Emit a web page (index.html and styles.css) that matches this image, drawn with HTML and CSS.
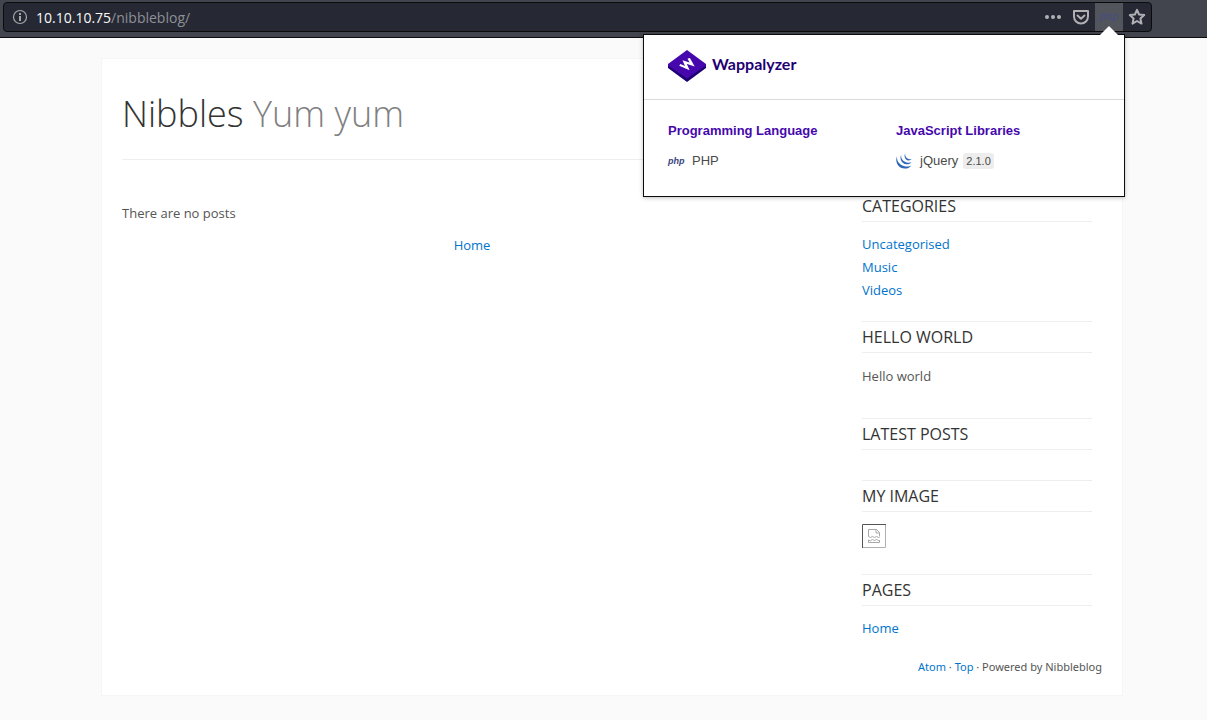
FILE: index.html
```html
<!DOCTYPE html>
<html lang="en">
<head>
<meta charset="utf-8">
<title>Nibbles - Yum yum</title>
<link rel="stylesheet" href="styles.css">
</head>
<body>
<div class="toolbar">
  <form class="urlbar">
    <button type="button" class="icon-button" aria-label="Site information">
      <svg class="icon-info" viewBox="0 0 16 16" width="16" height="16"><circle cx="8" cy="8" r="6.500" fill="none" stroke="#a5a6aa" stroke-width="1.200"/><path d="M7 4h2v2H7zM7 7h2v5H7z" fill="#a5a6aa"/></svg>
    </button>
    <div class="address" role="textbox" aria-label="Address" tabindex="0"><span class="host">10.10.10.75</span>/nibbleblog/</div>
    <div class="actions">
      <button type="button" class="action" aria-label="Page actions">
        <svg viewBox="0 0 18 18" width="18" height="18" fill="#b1b1b5"><circle cx="3" cy="9" r="2"/><circle cx="9" cy="9" r="2"/><circle cx="15" cy="9" r="2"/></svg>
      </button>
      <button type="button" class="action" aria-label="Save to Pocket">
        <svg viewBox="0 0 18 18" width="18" height="18" fill="none" stroke="#b1b1b5" stroke-width="2" stroke-linejoin="round" stroke-linecap="round"><path d="M2 3h14v5.500a7 7 0 0 1-14 0z"/><path d="M5.500 7.500L9 10.800l3.500-3.300"/></svg>
      </button>
      <div class="extension">
        <button type="button" class="action action-open" aria-label="Wappalyzer"><span class="php-badge">php</span></button>
        <section class="popup" aria-label="Wappalyzer">
          <svg class="popup-arrow" viewBox="0 0 20 10" width="20" height="10"><path d="M0 10L10 0l10 10z" fill="#fff"/></svg>
          <header class="popup-header">
            <svg viewBox="0 0 38 32" width="38" height="32"><path d="M0 15v3l19 14 19-14v-3z" fill="#1f0073"/><path d="M19 0L38 14v1.500L19 28.500 0 15.500V14z" fill="#4608ad"/><path transform="translate(19 14) rotate(-36) skewX(14)" d="M-5.500-3.500l2.500 7 3-6.500 3 6.500 2.500-7" fill="none" stroke="#fff" stroke-width="2.300"/></svg>
            <span class="brand">Wappalyzer</span>
          </header>
          <div class="popup-body">
            <div class="tech">
              <h2>Programming Language</h2>
              <p><span class="tech-icon php-icon">php</span><span>PHP</span></p>
            </div>
            <div class="tech">
              <h2>JavaScript Libraries</h2>
              <p><svg class="tech-icon" viewBox="0 0 16 16" width="16" height="16" fill="#2c66b5"><path d="M1.200 3C-1.500 8.500 2 15 8.500 15.600c3 .2 5.500-1 6.800-3.100-2 1.200-5 1.500-7.500.6C3 11.500.2 7.500 1.200 3z"/><path d="M5.300 1.500C3 6 6 10.800 10.500 11.300c2 .2 4-.6 5-2-1.700.6-3.500.7-5 .1C6.500 8.200 4.500 5 5.300 1.500z"/><path d="M9.200.5C7.500 4 9.500 7 12.500 7.400c1.300.1 2.500-.4 3.200-1.300-1 .3-2 .3-3 0C10.200 5.300 8.700 3 9.200.5z"/></svg><span>jQuery</span><span class="version">2.1.0</span></p>
            </div>
          </div>
        </section>
      </div>
      <button type="button" class="action" aria-label="Bookmark this page">
        <svg viewBox="0 0 18 18" width="18" height="18" fill="none" stroke="#b1b1b5" stroke-width="2" stroke-linejoin="round"><path d="M9 1.800l2.100 4.700 5.100.6-3.800 3.400 1.100 5.100L9 13l-4.500 2.600 1.100-5.100L1.800 7.100l5.100-.6z"/></svg>
      </button>
    </div>
  </form>
</div>
<div class="page">
  <div class="container">
    <header class="blog-header"><h1>Nibbles <span>Yum yum</span></h1></header>
    <div class="columns">
      <main>
        <p>There are no posts</p>
        <nav class="pager"><a href="#">Home</a></nav>
      </main>
      <aside>
        <section class="widget">
          <h2>Categories</h2>
          <ul><li><a href="#">Uncategorised</a></li><li><a href="#">Music</a></li><li><a href="#">Videos</a></li></ul>
        </section>
        <section class="widget">
          <h2>Hello world</h2>
          <p>Hello world</p>
        </section>
        <section class="widget"><h2>Latest posts</h2></section>
        <section class="widget">
          <h2>My image</h2>
          <div class="picture">
            <svg viewBox="0 0 24 24" width="24" height="24" role="img" aria-label="Missing image"><path d="M.5 24V.5H24" fill="none" stroke="#555"/><path d="M1 23.500h22.500V1" fill="none" stroke="#b0b0b0"/><path d="M6.500 12.500v-7h8l3 3v4M14 5.500v3.500h3.500M6.500 12l2 2 2-2 2 2 2-2 2 2 1-1M6.500 16v2.500h11V16l-1 1-2-2-2 2-2-2-2 2z" fill="none" stroke="#a8a8a8"/></svg>
          </div>
        </section>
        <section class="widget">
          <h2>Pages</h2>
          <ul><li><a href="#">Home</a></li></ul>
        </section>
      </aside>
    </div>
    <footer><a href="#">Atom</a> · <a href="#">Top</a> · Powered by Nibbleblog</footer>
  </div>
</div>
</body>
</html>
```
FILE: styles.css
```css
* { box-sizing: border-box; }
body {
  margin: 0;
  min-height: 100vh;
  background: #fafafa;
  color: #555;
  font: 13px/23px "Open Sans", "Noto Sans", sans-serif;
}
h1, h2, p, ul { margin: 0; padding: 0; font-weight: 400; }
ul { list-style: none; }
a { color: #0074cc; text-decoration: none; }
button { padding: 0; border: 0; background: none; font: inherit; }
svg { display: block; }

.toolbar {
  padding: 2px 55px 5px 3px;
  background: #42454d;
  border-bottom: 1px solid #0c0c0d;
}
.urlbar {
  display: flex;
  align-items: center;
  height: 30px;
  margin: 0;
  padding-left: 8px;
  background: #262933;
  border: 1px solid #0c0c0d;
  border-radius: 4px;
}
.address {
  flex: 1;
  padding: 1px 0 0 8px;
  color: #8f9097;
  font: 14px/28px "Open Sans", "Noto Sans", sans-serif;
}
.host { color: #f9f9fa; }
.actions { display: flex; }
.action {
  display: flex;
  align-items: center;
  justify-content: center;
  width: 28px;
  height: 28px;
}
.action-open { background: #52555b; }
.php-badge {
  color: #454d85;
  font: italic 10px/16px "DejaVu Sans", sans-serif;
}
.extension { position: relative; }

.popup {
  position: absolute;
  z-index: 1;
  top: 31px;
  right: -2px;
  width: 482px;
  background: #fff;
  border: 1px solid #0c0c0d;
  box-shadow: 0 1px 4px rgba(0, 0, 0, .25);
  color: #4a4a4a;
  font: 13px/20px "Liberation Sans", sans-serif;
}
.popup-arrow {
  position: absolute;
  top: -9px;
  right: 5px;
}
.popup-header {
  display: flex;
  align-items: center;
  gap: 6px;
  height: 65px;
  padding: 0 24px 2px;
  border-bottom: 1px solid #dbdbdb;
}
.brand {
  padding-bottom: 4px;
  color: #1f0073;
  font: 700 16px/20px Lato, sans-serif;
}
.popup-body {
  display: grid;
  grid-template-columns: 1fr 1fr;
  gap: 24px;
  padding: 21px 24px 25px;
}
.tech { width: 204px; }
.tech h2 {
  margin-bottom: 10px;
  color: #4608ad;
  font-size: 13px;
  font-weight: 700;
}
.tech p { display: flex; align-items: center; }
.tech-icon { width: 16px; margin-right: 8px; }
.php-icon {
  color: #3a4580;
  font: italic 700 9px/16px "Liberation Sans", sans-serif;
}
.version {
  margin-left: 5px;
  padding: 0 3px;
  background: #ededed;
  border-radius: 3px;
  font-size: 11px;
  line-height: 16px;
}

.page { padding: 20px 68px 24px 85px; }
.container {
  max-width: 1022px;
  margin: 0 auto;
  padding: 20px;
  background: #fff;
  border: 1px solid #f5f5f5;
}
.blog-header {
  padding: 10px 0 20px;
  border-bottom: 1px solid #eee;
}
h1 {
  color: #333;
  font-size: 36px;
  font-weight: 300;
  line-height: 50px;
}
h1 span { color: #808080; }
.columns {
  display: grid;
  grid-template-columns: minmax(0, 1fr) 230px;
  gap: 40px;
  padding: 30px 10px 0 0;
}
main { padding-top: 12px; }
.pager { padding-top: 9px; text-align: center; }
.widget { padding-bottom: 19px; }
.widget h2 {
  margin-bottom: 11px;
  border: solid #eee;
  border-width: 1px 0;
  color: #333;
  font-size: 16px;
  line-height: 30px;
  text-transform: uppercase;
}
.widget p { padding: 1px 0 11px; }
.picture { padding: 1px 0 7px; }
footer {
  font: 11px/16px "Noto Sans", sans-serif;
  text-align: right;
}
```
